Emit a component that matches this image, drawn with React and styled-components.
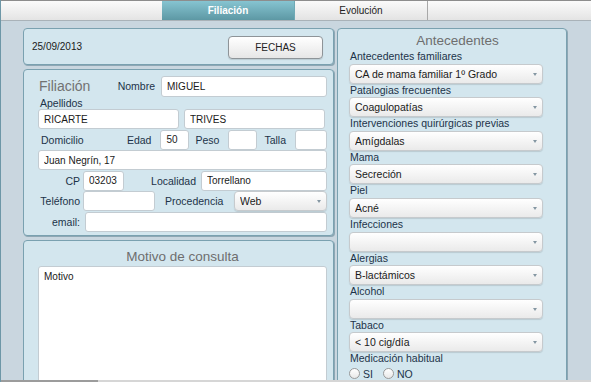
import React from 'react';
import styled, { createGlobalStyle } from 'styled-components';

const GlobalStyle = createGlobalStyle`
html, body {
    margin:0;
    padding:0;
    background:#c9d6df;
    overflow:hidden;
}
body {
    font-family:"Liberation Sans", Arial, sans-serif;
}
* { box-sizing:border-box; }
`;

const antecedentes = [
    { label: 'Antecedentes familiares', value: 'CA de mama familiar 1º Grado' },
    { label: 'Patalogias frecuentes', value: 'Coagulopatías' },
    { label: 'Intervenciones quirúrgicas previas', value: 'Amígdalas' },
    { label: 'Mama', value: 'Secreción' },
    { label: 'Piel', value: 'Acné' },
    { label: 'Infecciones', value: '' },
    { label: 'Alergias', value: 'B-lactámicos' },
    { label: 'Alcohol', value: '' },
    { label: 'Tabaco', value: '< 10 cig/día' },
];

function Select({ value, width }) {
    return (
        <SelectWrap $w={width}>
            <SelectEl defaultValue={value}>
                <option value={value}>{value}</option>
            </SelectEl>
        </SelectWrap>
    );
}

export default function App() {
    return (
        <Page>
            <GlobalStyle />
            <TopBar>
                <Tab $active>Filiación</Tab>
                <Tab>Evolución</Tab>
            </TopBar>
            <Main>
                <LeftCol>
                    <DatePanel>
                        <DateText>25/09/2013</DateText>
                        <Button>FECHAS</Button>
                    </DatePanel>
                    <FiliacionPanel>
                        <Row $h={22}>
                            <PanelTitle>Filiación</PanelTitle>
                            <Label $mr={6}>Nombre</Label>
                            <Input $w={166} $h={21} defaultValue="MIGUEL" />
                        </Row>
                        <Row $h={12}>
                            <Label $ml={2}>Apellidos</Label>
                        </Row>
                        <Rows>
                            <Row>
                                <Input $w={141} defaultValue="RICARTE" />
                                <Input $w={141} $ml={5} defaultValue="TRIVES" />
                            </Row>
                            <Row>
                                <Label $ml={3} $grow>Domicilio</Label>
                                <Label $mr={9}>Edad</Label>
                                <Input $w={29} defaultValue="50" />
                                <Label $ml={6} $mr={9}>Peso</Label>
                                <Input $w={29} />
                                <Label $ml={7} $mr={9}>Talla</Label>
                                <Input $w={32} />
                            </Row>
                            <Row>
                                <Input $w={289} defaultValue="Juan Negrín, 17" />
                            </Row>
                            <Row>
                                <SideLabel>CP</SideLabel>
                                <Input $w={41} defaultValue="03203" />
                                <Label $grow $right $mr={5}>Localidad</Label>
                                <Input $w={126} defaultValue="Torrellano" />
                            </Row>
                            <Row>
                                <SideLabel>Teléfono</SideLabel>
                                <Input $w={72} />
                                <Label $grow $ml={10}>Procedencia</Label>
                                <Select value="Web" width={93} />
                            </Row>
                            <Row>
                                <SideLabel>email:</SideLabel>
                                <Input $w={242} $ml={2} />
                            </Row>
                        </Rows>
                    </FiliacionPanel>
                    <MotivoPanel>
                        <CenterTitle>Motivo de consulta</CenterTitle>
                        <TextArea defaultValue="Motivo" />
                    </MotivoPanel>
                </LeftCol>
                <RightPanel>
                    <CenterTitle $mt={4}>Antecedentes</CenterTitle>
                    {antecedentes.map((a) => (
                        <Group key={a.label}>
                            <GroupLabel>{a.label}</GroupLabel>
                            <Select value={a.value} width={194} />
                        </Group>
                    ))}
                    <Group>
                        <GroupLabel>Medicación habitual</GroupLabel>
                        <Radios>
                            <RadioLabel><Radio type="radio" name="med" />SI</RadioLabel>
                            <RadioLabel><Radio type="radio" name="med" />NO</RadioLabel>
                        </Radios>
                    </Group>
                </RightPanel>
            </Main>
            <ScrollTrack />
        </Page>
    );
}

const Page = styled.div`
position:relative;
height:382px;
overflow:hidden;
border-left:1px solid #6d97a7;
background:#c9d6df;
`;

const ScrollTrack = styled.div`
position:absolute;
left:-1px;
right:0;
bottom:0;
height:2px;
background:linear-gradient(90deg, #9c9c9c 0, #9c9c9c 98px, #d6d6d6 98px);
`;

const TopBar = styled.div`
height:21px;
display:flex;
padding-left:161px;
border-top:1px solid #8d8d8d;
border-bottom:1px solid #a9b2b8;
background:linear-gradient(#fbfbfb, #e4e4e4);
`;

const Tab = styled.div`
width:133px;
display:flex;
align-items:center;
justify-content:center;
font-size:10px;
font-weight:${(p) => (p.$active ? 'bold' : 'normal')};
color:${(p) => (p.$active ? '#fff' : '#222')};
background:${(p) => (p.$active ? 'linear-gradient(#86c4d1, #5d98a4)' : 'linear-gradient(#fafafa, #e3e3e3)')};
border-right:1px solid ${(p) => (p.$active ? '#6fa9b5' : '#a8a8a8')};
`;

const Main = styled.div`
display:flex;
align-items:flex-start;
gap:3px;
padding:7px 0 0 22px;
`;

const LeftCol = styled.div`
width:311px;
display:flex;
flex-direction:column;
gap:4px;
`;

const Panel = styled.div`
background:#d3e6ee;
border:1px solid #7aa1b0;
border-radius:4px;
box-shadow:1px 1px 0 rgba(70,110,128,0.45);
`;

const DatePanel = styled(Panel)`
height:37px;
display:flex;
align-items:center;
justify-content:space-between;
padding:0 10px 0 8px;
`;

const DateText = styled.span`
font-size:10px;
color:#1a1a1a;
`;

const Button = styled.button`
width:95px;
height:23px;
margin-top:1px;
border:1px solid #8e9498;
border-radius:4px;
background:linear-gradient(#ffffff, #e6e6e6);
font-family:inherit;
font-size:10px;
color:#222;
box-shadow:0 1px 1px rgba(0,0,0,0.12);
`;

const FiliacionPanel = styled(Panel)`
height:167px;
padding:5px 6px 0 14px;
display:flex;
flex-direction:column;
`;

const Rows = styled.div`
display:flex;
flex-direction:column;
gap:0.6px;
`;

const Row = styled.div`
height:${(p) => p.$h || 20}px;
display:flex;
align-items:center;
`;

const PanelTitle = styled.span`
flex:1;
font-size:14px;
color:#727272;
padding-left:1px;
`;

const Label = styled.span`
font-size:10.5px;
color:#1c3349;
white-space:nowrap;
flex:${(p) => (p.$grow ? 1 : 'none')};
text-align:${(p) => (p.$right ? 'right' : 'left')};
margin-left:${(p) => p.$ml || 0}px;
margin-right:${(p) => p.$mr || 0}px;
`;

const SideLabel = styled.span`
width:45px;
padding-right:3px;
text-align:right;
font-size:10.5px;
color:#1c3349;
`;

const Input = styled.input`
width:${(p) => p.$w}px;
height:${(p) => p.$h || 20}px;
margin-left:${(p) => p.$ml || 0}px;
border:1px solid #c3ccd2;
border-radius:3px;
background:#fff;
padding:0 5px;
font-family:inherit;
font-size:10px;
color:#1a1a1a;
outline:none;
`;

const SelectWrap = styled.div`
position:relative;
width:${(p) => p.$w}px;
height:20px;
&::after{
    content:'';
    position:absolute;
    right:6px;
    top:9px;
    border-left:2.5px solid transparent;
    border-right:2.5px solid transparent;
    border-top:3px solid #8496a2;
    pointer-events:none;
}
`;

const SelectEl = styled.select`
appearance:none;
width:100%;
height:100%;
border:1px solid #c6cacd;
border-radius:4px;
background:linear-gradient(#ffffff, #eaeaea);
box-shadow:0 1px 1px rgba(0,0,0,0.12);
padding:0 0 0 5px;
font-family:inherit;
font-size:10.5px;
color:#1a1a1a;
outline:none;
`;

const MotivoPanel = styled(Panel)`
height:160px;
padding:8px 6px 0 14px;
display:flex;
flex-direction:column;
`;

const CenterTitle = styled.div`
text-align:center;
font-size:13.5px;
line-height:16px;
color:#6e6e6e;
margin-top:${(p) => p.$mt || 0}px;
margin-bottom:1px;
`;

const TextArea = styled.textarea`
flex:1;
resize:none;
border:1px solid #c3ccd2;
border-radius:3px;
background:#fff;
padding:4px 5px;
font-family:inherit;
font-size:10px;
color:#1a1a1a;
outline:none;
`;

const RightPanel = styled(Panel)`
width:230px;
height:370px;
padding:0 0 0 11px;
display:flex;
flex-direction:column;
`;

const Group = styled.div`
display:flex;
flex-direction:column;
`;

const GroupLabel = styled.div`
font-size:10.5px;
line-height:13.6px;
color:#1c3349;
padding-left:1px;
`;

const Radios = styled.div`
display:flex;
gap:10px;
margin-top:2px;
`;

const RadioLabel = styled.label`
display:flex;
align-items:center;
gap:3px;
font-size:10.5px;
color:#1c3349;
`;

const Radio = styled.input`
appearance:none;
margin:0;
width:11px;
height:11px;
border:1px solid #9a9a9a;
border-radius:50%;
background:linear-gradient(#ffffff, #e8e8e8);
`;
